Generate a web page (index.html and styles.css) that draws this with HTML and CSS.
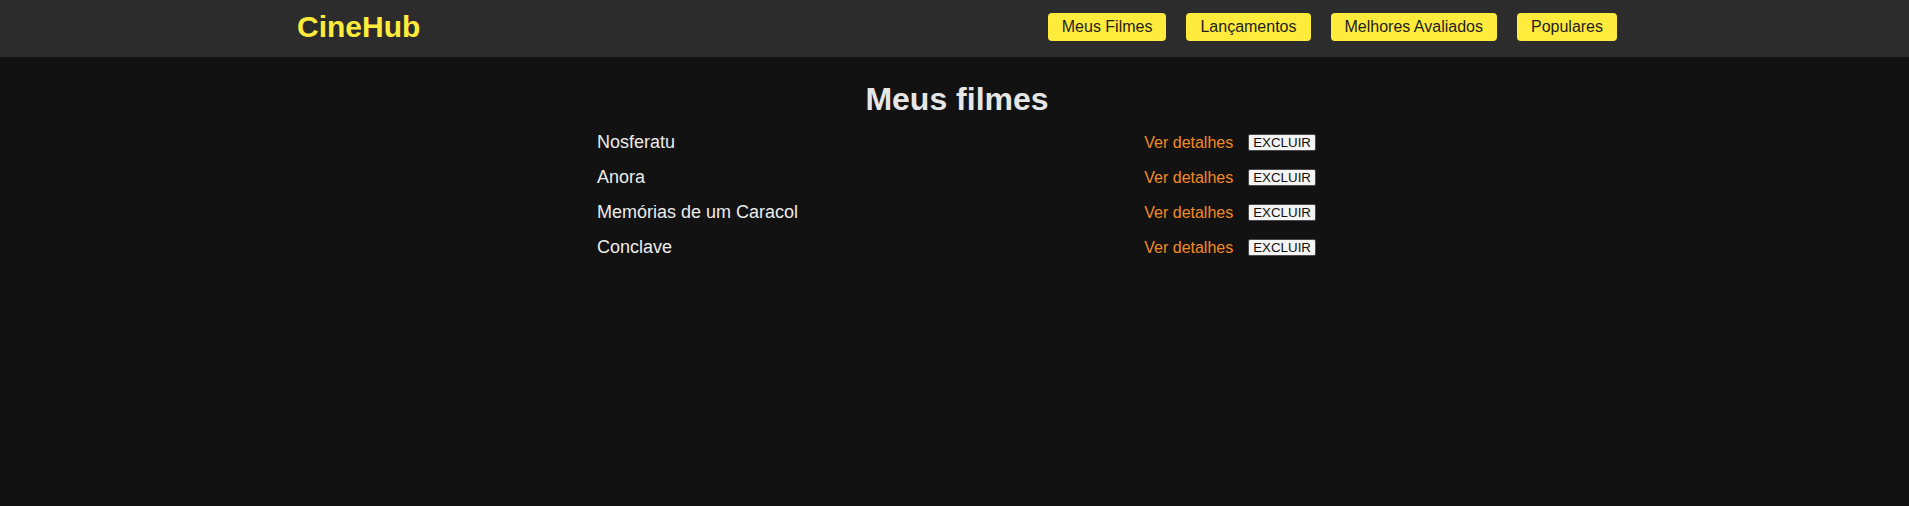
FILE: index.html
```html
<!DOCTYPE html>
<html lang="pt-BR">
<head>
<meta charset="utf-8">
<title>CineHub - Meus filmes</title>
<link rel="stylesheet" href="styles.css">
</head>
<body>
<header class="site-header">
  <div class="header-inner">
    <div class="logo">CineHub</div>
    <nav class="nav">
      <a class="nav-btn" href="#">Meus Filmes</a>
      <a class="nav-btn" href="#">Lançamentos</a>
      <a class="nav-btn" href="#">Melhores Avaliados</a>
      <a class="nav-btn" href="#">Populares</a>
    </nav>
  </div>
</header>
<main class="main">
  <h1 class="page-title">Meus filmes</h1>
  <ul class="movie-list">
    <li class="movie-row">
      <span class="movie-name">Nosferatu</span>
      <div class="actions"><a class="details" href="#">Ver detalhes</a><button class="delete-btn">EXCLUIR</button></div>
    </li>
    <li class="movie-row">
      <span class="movie-name">Anora</span>
      <div class="actions"><a class="details" href="#">Ver detalhes</a><button class="delete-btn">EXCLUIR</button></div>
    </li>
    <li class="movie-row">
      <span class="movie-name">Memórias de um Caracol</span>
      <div class="actions"><a class="details" href="#">Ver detalhes</a><button class="delete-btn">EXCLUIR</button></div>
    </li>
    <li class="movie-row">
      <span class="movie-name">Conclave</span>
      <div class="actions"><a class="details" href="#">Ver detalhes</a><button class="delete-btn">EXCLUIR</button></div>
    </li>
  </ul>
</main>
</body>
</html>
```

FILE: styles.css
```css
* { box-sizing: border-box; }

html, body {
  margin: 0;
  padding: 0;
}

body {
  background: #121212;
  color: #e6e6e6;
  font-family: "Liberation Sans", Arial, sans-serif;
  min-height: 506px;
}

.site-header {
  background: #2c2c2c;
  height: 57px;
}

.header-inner {
  width: 1325px;
  margin: 0 auto;
  padding: 9px 0 0 5px;
  display: flex;
  justify-content: space-between;
  align-items: flex-start;
}

.logo {
  color: #ffeb3b;
  font-size: 30px;
  font-weight: bold;
  line-height: 35px;
}

.nav {
  display: flex;
  gap: 20px;
  margin-top: 4px;
}

.nav-btn {
  display: block;
  background: #ffeb3b;
  color: #1e1e1e;
  text-decoration: none;
  font-size: 16px;
  line-height: 18.4px;
  padding: 5px 14px;
  border-radius: 4px;
}

.main {
  padding: 24px 0 0 4px;
}

.page-title {
  margin: 0 0 7px;
  text-align: center;
  font-size: 32px;
  line-height: 37px;
  font-weight: bold;
  color: #e6e6e6;
  padding-left: 1px;
}

.movie-list {
  list-style: none;
  margin: 0 auto;
  padding: 0;
  width: 719px;
}

.movie-row {
  display: flex;
  justify-content: space-between;
  align-items: center;
  padding: 7px 0;
  line-height: 21px;
}

.movie-name {
  font-size: 18px;
  color: #ececec;
}

.actions {
  display: flex;
  align-items: center;
  gap: 15px;
}

.details {
  color: #f28a22;
  text-decoration: none;
  font-size: 16px;
}

.delete-btn {
  font-family: "Liberation Sans", Arial, sans-serif;
  font-size: 13.33px;
  line-height: 15px;
  height: 17px;
  padding: 0 4px;
  background: #f4f4f4;
  color: #111;
  border: 1px solid #4a4a4a;
  border-radius: 2px;
}
```
